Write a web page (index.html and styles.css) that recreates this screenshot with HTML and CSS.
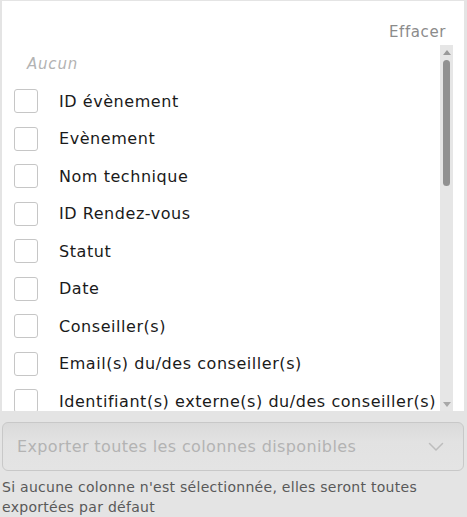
FILE: index.html
```html
<!DOCTYPE html>
<html lang="fr">
<head>
<meta charset="utf-8">
<title>Export colonnes</title>
<link rel="stylesheet" href="styles.css">
</head>
<body>
<div class="page">
  <div class="panel">
    <div class="panel-head">
      <button class="clear">Effacer</button>
    </div>
    <div class="list-wrap">
      <ul class="list">
        <li class="empty">Aucun</li>
        <li class="item"><span class="box"></span><span class="label">ID évènement</span></li>
        <li class="item"><span class="box"></span><span class="label">Evènement</span></li>
        <li class="item"><span class="box"></span><span class="label">Nom technique</span></li>
        <li class="item"><span class="box"></span><span class="label">ID Rendez-vous</span></li>
        <li class="item"><span class="box"></span><span class="label">Statut</span></li>
        <li class="item"><span class="box"></span><span class="label">Date</span></li>
        <li class="item"><span class="box"></span><span class="label">Conseiller(s)</span></li>
        <li class="item"><span class="box"></span><span class="label">Email(s) du/des conseiller(s)</span></li>
        <li class="item"><span class="box"></span><span class="label">Identifiant(s) externe(s) du/des conseiller(s)</span></li>
      </ul>
      <div class="scrollbar">
        <span class="arrow up"></span>
        <div class="track"><span class="thumb"></span></div>
        <span class="arrow down"></span>
      </div>
    </div>
  </div>
  <div class="select">
    <span class="placeholder">Exporter toutes les colonnes disponibles</span>
    <svg class="chevron" width="16" height="10" viewBox="0 0 16 10"><path d="M1.5 1.5 L8 8 L14.5 1.5" fill="none" stroke="#bdbdbd" stroke-width="1.5" stroke-linecap="round" stroke-linejoin="round"/></svg>
  </div>
  <p class="help">Si aucune colonne n'est sélectionnée, elles seront toutes exportées par défaut</p>
</div>
</body>
</html>
```

FILE: styles.css
```css
* { box-sizing: border-box; }
html, body { margin: 0; padding: 0; }
body {
  background: #e4e4e4;
  font-family: "DejaVu Sans", "Liberation Sans", sans-serif;
  color: #1a1a1a;
  height: 517px;
  overflow: hidden;
}
.page {
  padding: 1px 3px 0 2px;
}
.panel {
  background: #ffffff;
  height: 410px;
  display: flex;
  flex-direction: column;
}
.panel-head {
  display: flex;
  justify-content: flex-end;
  height: 44px;
  padding: 18px 18px 0 0;
}
.clear {
  background: none;
  border: 0;
  padding: 0;
  font: inherit;
  font-size: 15px;
  letter-spacing: 0.6px;
  line-height: 20px;
  color: #8b8b8b;
  cursor: pointer;
}
.list-wrap {
  flex: 1;
  display: flex;
  min-height: 0;
  padding-right: 11px;
}
.list {
  flex: 1;
  list-style: none;
  margin: 0;
  padding: 0;
  overflow: hidden;
}
.empty {
  height: 37.5px;
  display: flex;
  align-items: center;
  padding-left: 25px;
  font-size: 15px;
  letter-spacing: 0.8px;
  font-style: italic;
  color: #b3b3b3;
}
.item {
  height: 37.5px;
  display: flex;
  align-items: center;
  padding-left: 12px;
  white-space: nowrap;
}
.box {
  flex: none;
  width: 24px;
  height: 24px;
  border: 1.5px solid #c6c6c6;
  border-radius: 3px;
  margin-right: 21px;
}
.label {
  font-size: 16px;
  letter-spacing: 0.55px;
  color: #1a1a1a;
}
.scrollbar {
  flex: none;
  width: 13px;
  background: #e6e6e6;
  display: flex;
  flex-direction: column;
  align-items: center;
  padding: 5px 0 4px;
}
.arrow {
  width: 0;
  height: 0;
  border-left: 4.5px solid transparent;
  border-right: 4.5px solid transparent;
}
.arrow.up { border-bottom: 5px solid #9a9a9a; }
.arrow.down { border-top: 5px solid #a8a8a8; }
.track {
  flex: 1;
  width: 100%;
  display: flex;
  justify-content: center;
  padding-top: 5px;
}
.thumb {
  width: 7px;
  height: 126px;
  background: #919191;
  border-radius: 4px;
}
.select {
  margin-top: 11px;
  height: 49px;
  border: 1px solid #c8c8c8;
  border-radius: 6px;
  background: linear-gradient(#dadada, #e2e2e2 40%, #e4e4e4);
  display: flex;
  align-items: center;
  justify-content: space-between;
  padding: 0 19px 0 14px;
}
.placeholder {
  font-size: 16px;
  letter-spacing: 0.38px;
  color: #b3b3b3;
}
.chevron { display: block; }
.help {
  margin: 6px 0 0;
  font-size: 14px;
  letter-spacing: 0.28px;
  line-height: 20px;
  color: #595959;
}
```
